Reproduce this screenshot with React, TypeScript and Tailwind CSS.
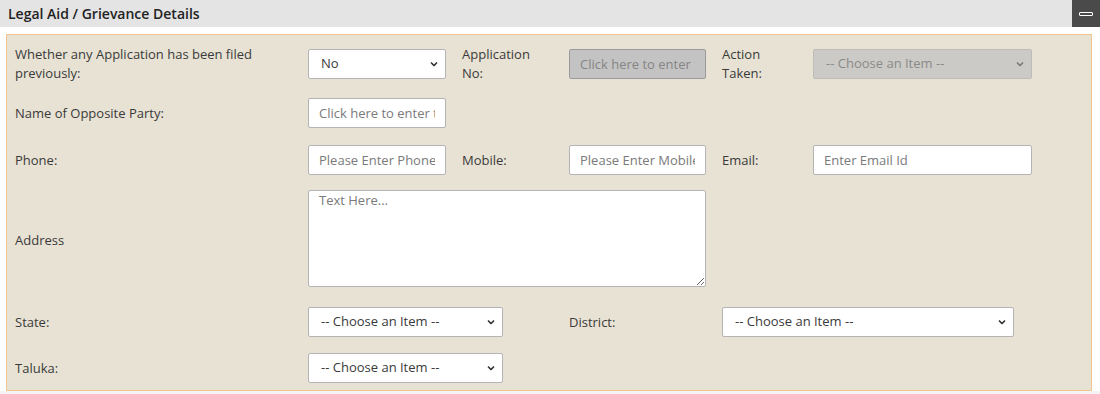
import React from "react";

function Chevron({ muted = false }: { muted?: boolean }) {
  return (
    <svg
      className="pointer-events-none absolute right-[8px] top-1/2 -translate-y-1/2"
      width="8"
      height="5"
      viewBox="0 0 8 5"
      fill="none"
    >
      <path d="M1 1l3 3 3-3" stroke={muted ? "#7a7a7a" : "#333"} strokeWidth="1.6" />
    </svg>
  );
}

function Select({ value, width, disabled = false }: { value: string; width: string; disabled?: boolean }) {
  return (
    <div className={`relative h-[30px] shrink-0 ${width}`}>
      <select
        disabled={disabled}
        defaultValue={value}
        className={
          disabled
            ? "h-full w-full appearance-none rounded-[2px] border border-[#bdbcb8] bg-[#cbcac6] pl-[12px] text-[13px] text-[#8a8a8a] outline-none"
            : "h-full w-full appearance-none rounded-[2px] border border-[#b4b4b4] bg-white pl-[12px] text-[13px] text-[#3a3a3a] outline-none"
        }
      >
        <option>{value}</option>
      </select>
      <Chevron muted={disabled} />
    </div>
  );
}

function TextInput({ placeholder, width, disabled = false }: { placeholder: string; width: string; disabled?: boolean }) {
  return (
    <input
      disabled={disabled}
      placeholder={placeholder}
      className={
        disabled
          ? `h-[30px] shrink-0 rounded-[2px] border border-[#9a9a9a] bg-[#c3c3c3] px-[10px] text-[13px] outline-none placeholder:text-[#858585] ${width}`
          : `h-[30px] shrink-0 rounded-[2px] border border-[#b4b4b4] bg-white px-[10px] text-[13px] outline-none placeholder:text-[#7a7a7a] ${width}`
      }
    />
  );
}

function Label({ children, width }: { children: React.ReactNode; width: string }) {
  return <div className={`shrink-0 text-[13px] leading-[19px] text-[#3a3a3a] ${width}`}>{children}</div>;
}

export default function App() {
  return (
    <div className="h-[394px] w-[1100px] overflow-hidden bg-white font-['Open_Sans',sans-serif]">
      <div className="flex h-[27px] items-center justify-between bg-[#e4e4e4]">
        <h2 className="pl-[8px] text-[14px] font-semibold text-[#222]">Legal Aid / Grievance Details</h2>
        <button className="flex h-[27px] w-[28px] items-center justify-center bg-[#4a4a4a]">
          <span className="block h-[4px] w-[14px] rounded-[1px] border border-white" />
        </button>
      </div>

      <div className="ml-[6px] mr-[8px] mt-[7px] border border-[#f0c68c] bg-[#e8e2d4] pb-[7px] pl-[8px] pt-[14px]">
        <div className="flex h-[30px] items-center">
          <Label width="w-[293px]">
            Whether any Application has been filed
            <br />
            previously:
          </Label>
          <Select value="No" width="w-[138px]" />
          <Label width="w-[123px] pl-[16px]">
            Application
            <br />
            No:
          </Label>
          <TextInput placeholder="Click here to enter text" width="w-[137px]" disabled />
          <Label width="w-[107px] pl-[16px]">
            Action
            <br />
            Taken:
          </Label>
          <Select value="-- Choose an Item --" width="w-[219px]" disabled />
        </div>

        <div className="mt-[19px] flex h-[30px] items-center">
          <Label width="w-[293px]">Name of Opposite Party:</Label>
          <TextInput placeholder="Click here to enter text" width="w-[138px]" />
        </div>

        <div className="mt-[17px] flex h-[30px] items-center">
          <Label width="w-[293px]">Phone:</Label>
          <TextInput placeholder="Please Enter Phone" width="w-[138px]" />
          <Label width="w-[123px] pl-[16px]">Mobile:</Label>
          <TextInput placeholder="Please Enter Mobile" width="w-[137px]" />
          <Label width="w-[107px] pl-[16px]">Email:</Label>
          <TextInput placeholder="Enter Email Id" width="w-[219px]" />
        </div>

        <div className="mt-[15px] flex h-[97px] items-center">
          <Label width="w-[293px]">
            <span className="relative top-[2px]">Address</span>
          </Label>
          <textarea
            placeholder="Text Here..."
            className="h-[97px] w-[398px] shrink-0 rounded-[2px] border border-[#b4b4b4] bg-white px-[10px] py-0 text-[13px] leading-[19px] outline-none placeholder:text-[#7a7a7a]"
          />
        </div>

        <div className="mt-[20px] flex h-[30px] items-center">
          <Label width="w-[293px]">State:</Label>
          <Select value="-- Choose an Item --" width="w-[195px]" />
          <Label width="w-[219px] pl-[66px]">District:</Label>
          <Select value="-- Choose an Item --" width="w-[292px]" />
        </div>

        <div className="mt-[16px] flex h-[30px] items-center">
          <Label width="w-[293px]">Taluka:</Label>
          <Select value="-- Choose an Item --" width="w-[195px]" />
        </div>
      </div>
      <div className="h-[4px] bg-[#f4f4f4]" />
    </div>
  );
}
